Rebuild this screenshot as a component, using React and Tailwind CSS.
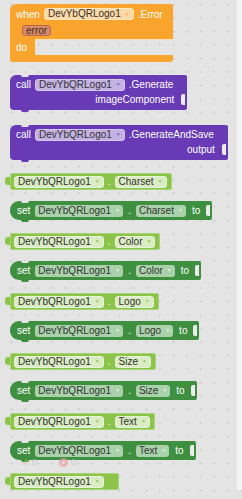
import React from 'react';

// Blockly-style workspace with App Inventor blocks

function Field({ label, box, arrow }) {
  return (
    <span className={`inline-flex items-center h-[12px] rounded-[3px] pl-[3px] pr-[3px] gap-[4px] text-[10px] leading-none text-[#333] ${box}`}>
      {label}
      <span className={`text-[5px] leading-none ${arrow}`}>▼</span>
    </span>
  );
}

function Getter({ prop }) {
  return (
    <div className="flex items-start -ml-[5px]">
      <div className="w-[5px] h-[8px] mt-[4px] bg-[#8cc34b] rounded-l-[3px]" />
      <div className="flex items-center h-[17px] bg-[#8cc34b] border border-[#a8d573] rounded-[2px] pl-[3px] pr-[4px] gap-[4px] text-white text-[10px]">
        <Field label="DevYbQRLogo1" box="bg-[#d9ecc2] border border-[#e8f4da]" arrow="text-[#9bcb6a]" />
        <span>.</span>
        <Field label={prop} box="bg-[#d9ecc2] border border-[#e8f4da]" arrow="text-[#9bcb6a]" />
      </div>
    </div>
  );
}

function Setter({ prop }) {
  return (
    <div className="relative flex items-center h-[19px] bg-[#3e8f40] rounded-l-[9px] rounded-r-[2px] pl-[7px] pr-[2px] gap-[5px] text-white text-[10px] w-fit">
      <span className="absolute top-0 left-[11px] w-[8px] h-[2px] bg-[#e4e4e4] rounded-b-[2px]" />
      <span className="absolute -bottom-[2px] left-[11px] w-[8px] h-[2px] bg-[#3e8f40] rounded-b-[2px]" />
      <span>set</span>
      <Field label="DevYbQRLogo1" box="bg-[#a9d1aa]" arrow="text-[#e6f2e6]" />
      <span>.</span>
      <Field label={prop} box="bg-[#a9d1aa]" arrow="text-[#e6f2e6]" />
      <span className="ml-[1px]">to</span>
      <span className="w-[4px] h-[11px] bg-[#ececec] rounded-l-[2px] ml-[1px]" />
    </div>
  );
}

function Call({ method, arg }) {
  return (
    <div className="relative w-fit bg-[#683ab6] rounded-tl-[6px] rounded-r-[2px] rounded-bl-[4px] pl-[6px] pr-[2px] pt-[3px] pb-[3px] text-white text-[10px]">
      <span className="absolute top-0 left-[11px] w-[8px] h-[2px] bg-[#e4e4e4] rounded-b-[2px]" />
      <span className="absolute -bottom-[2px] left-[11px] w-[8px] h-[2px] bg-[#683ab6] rounded-b-[2px]" />
      <div className="flex items-center gap-[4px] h-[13px] pr-[12px]">
        <span>call</span>
        <Field label="DevYbQRLogo1" box="bg-[#c3b1e2] border border-[#d6c9ee]" arrow="text-[#8e6cc8]" />
        <span>.{method}</span>
      </div>
      <div className="flex items-center justify-end gap-[7px] h-[15px] mt-[1px]">
        <span>{arg}</span>
        <span className="w-[4px] h-[11px] bg-[#ececec] rounded-l-[2px]" />
      </div>
    </div>
  );
}

export default function App() {
  return (
    <div className="relative w-[242px] h-[499px] overflow-hidden bg-[#e4e4e4] font-['Liberation_Sans',Arial,sans-serif]">
      {/* workspace grid */}
      <svg className="absolute inset-0" width="242" height="499">
        <defs>
          <pattern id="grid" width="13.5" height="13.5" patternUnits="userSpaceOnUse" x="10" y="3">
            <path d="M0 1.5h3M1.5 0v3" stroke="#d2d2d2" strokeWidth="1" />
          </pattern>
        </defs>
        <rect width="242" height="499" fill="url(#grid)" />
      </svg>
      <div className="absolute right-0 top-0 w-[5px] h-[490px] bg-[#f4f4f4]" />

      <div className="relative flex flex-col items-start pl-[10px] pt-[4px]">
        {/* event block */}
        <div className="w-[163px] text-white text-[10px]">
          <div className="bg-[#f9a42d] rounded-tl-[6px] rounded-tr-[2px] pl-[6px] pt-[4px] h-[35px]">
            <div className="flex items-center gap-[4px] h-[12px]">
              <span>when</span>
              <Field label="DevYbQRLogo1" box="bg-[#fcd8a4] border border-[#fde6c4]" arrow="text-[#f4b45a]" />
              <span>.Error</span>
            </div>
            <div className="flex mt-[5px] ml-[6px]">
              <span className="inline-flex items-center h-[11px] px-[3px] rounded-[3px] bg-[#d98a6a] border border-[#b9684c] text-[#3a2a22] leading-none">error</span>
            </div>
          </div>
          <div className="flex h-[16px]">
            <div className="w-[25px] bg-[#f9a42d] flex items-center pl-[6px]">do</div>
            <div className="flex-1 border-l border-t border-[#fbe2bd]" />
          </div>
          <div className="h-[7px] bg-[#f9a42d] rounded-b-[3px]" />
        </div>

        <div className="mt-[13px]">
          <Call method="Generate" arg="imageComponent" />
        </div>
        <div className="mt-[15px]">
          <Call method="GenerateAndSave" arg="output" />
        </div>

        <div className="mt-[13px]"><Getter prop="Charset" /></div>
        <div className="mt-[11px]"><Setter prop="Charset" /></div>
        <div className="mt-[13px]"><Getter prop="Color" /></div>
        <div className="mt-[11px]"><Setter prop="Color" /></div>
        <div className="mt-[13px]"><Getter prop="Logo" /></div>
        <div className="mt-[11px]"><Setter prop="Logo" /></div>
        <div className="mt-[13px]"><Getter prop="Size" /></div>
        <div className="mt-[11px]"><Setter prop="Size" /></div>
        <div className="mt-[13px]"><Getter prop="Text" /></div>
        <div className="mt-[11px]"><Setter prop="Text" /></div>
        <div className="mt-[13px] flex items-start -ml-[5px]">
          <div className="w-[5px] h-[8px] mt-[4px] bg-[#8cc34b] rounded-l-[3px]" />
          <div className="flex items-center h-[17px] bg-[#8cc34b] border border-[#a8d573] rounded-[2px] pl-[3px] pr-[14px]">
            <Field label="DevYbQRLogo1" box="bg-[#d9ecc2] border border-[#e8f4da]" arrow="text-[#9bcb6a]" />
          </div>
        </div>
      </div>

      {/* warning / error counters */}
      <div className="absolute left-[22px] top-[456px] flex items-center gap-[22px] text-[9px] text-[#bbb] opacity-70">
        <span className="flex items-center gap-[2px]">
          <span className="text-[#d8c468]">⚠</span>0
        </span>
        <span className="flex items-center gap-[3px]">
          <span className="w-[9px] h-[9px] rounded-full bg-[#e8a0a0] text-white text-[7px] leading-[9px] text-center">×</span>0
        </span>
      </div>
    </div>
  );
}
